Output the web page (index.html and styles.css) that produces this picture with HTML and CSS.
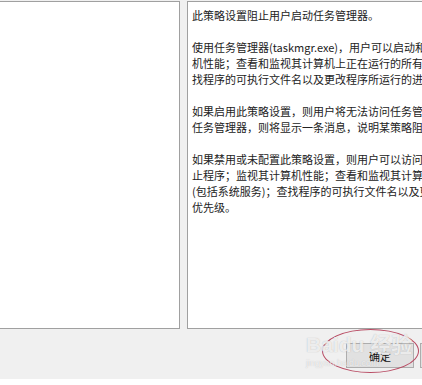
FILE: index.html
```html
<!DOCTYPE html>
<html lang="zh-CN">
<head>
    <meta charset="UTF-8">
    <title>阻止访问任务管理器</title>
    <link rel="stylesheet" href="styles.css">
</head>
<body>
    <div class="dialog">
        <div class="panes">
            <!-- 左侧选项区 -->
            <div class="pane pane-left"></div>

            <!-- 右侧帮助说明 -->
            <div class="pane pane-right">
                <p>此策略设置阻止用户启动任务管理器。</p>
                <p>使用任务管理器(taskmgr.exe)，用户可以启动和停止程序；监视其计算<br>机性能；查看和监视其计算机上正在运行的所有程序(包括系统服务)；查<br>找程序的可执行文件名以及更改程序所运行的进程的优先级。</p>
                <p>如果启用此策略设置，则用户将无法访问任务管理器。如果用户尝试启动<br>任务管理器，则将显示一条消息，说明某策略阻止了该操作。</p>
                <p>如果禁用或未配置此策略设置，则用户可以访问任务管理器以启动和停<br>止程序；监视其计算机性能；查看和监视其计算机上正在运行的所有程序<br>(包括系统服务)；查找程序的可执行文件名以及更改程序所运行的进程的<br>优先级。</p>
            </div>
        </div>

        <div class="footer">
            <button class="btn">确定</button>
            <button class="btn">取消</button>
            <div class="mark-ring"></div>
            <div class="watermark">
                <span class="wm-logo">Bai<b>du</b> 经验</span>
                <span class="wm-url">jingyan.baidu.com</span>
            </div>
        </div>
        <div class="bottom-strip"></div>
    </div>
</body>
</html>
```
FILE: styles.css
```css
body {
    margin: 0;
    background: #fff;
    font-family: "Noto Sans CJK SC", "Liberation Sans", sans-serif;
    color: #222;
    overflow: hidden;
}
.dialog {
    width: 422px;
    height: 385px;
    background: #f0f0f0;
    display: flex;
    flex-direction: column;
    overflow: hidden;
}
.panes {
    display: flex;
    gap: 7px;
    height: 329px;
    padding-top: 1px;
    box-sizing: border-box;
}
.pane {
    background: #fff;
    border: 1px solid #a0a0a0;
    box-sizing: border-box;
}
.pane-left {
    width: 180px;
    border-left: none;
}
.pane-right {
    flex: 1;
    border-right: none;
    padding: 5px 0 0 4px;
    font-size: 11px;
    line-height: 16px;
    white-space: nowrap;
    overflow: hidden;
}
.pane-right p {
    margin: 0 0 16px;
}
.footer {
    position: relative;
    height: 50px;
    display: flex;
    align-items: flex-start;
    gap: 6px;
    padding: 14px 0 0 346px;
    box-sizing: border-box;
}
.btn {
    flex: none;
    width: 68px;
    height: 25px;
    background: #e1e1e1;
    border: 1px solid #adadad;
    font-family: inherit;
    font-size: 11px;
    color: #111;
    padding: 0;
}
.mark-ring {
    position: absolute;
    left: 322px;
    top: 0;
    width: 97px;
    height: 44px;
    border: 1px solid #b84a62;
    border-radius: 50%;
    box-sizing: border-box;
    pointer-events: none;
}
.watermark {
    position: absolute;
    left: 306px;
    top: 4px;
    display: flex;
    flex-direction: column;
    pointer-events: none;
}
.wm-logo {
    font-family: "Liberation Sans", "Noto Sans CJK SC", sans-serif;
    font-size: 21px;
    font-weight: bold;
    line-height: 24px;
    color: rgba(255, 255, 255, 0.75);
    text-shadow: 0 0 1px rgba(120, 120, 120, 0.5);
}
.wm-logo b {
    font-weight: bold;
}
.wm-url {
    font-family: "Liberation Sans", sans-serif;
    font-size: 9px;
    line-height: 12px;
    color: rgba(255, 255, 255, 0.7);
    text-shadow: 0 0 1px rgba(120, 120, 120, 0.4);
}
.bottom-strip {
    flex: 1;
    background: #fff;
}
```
